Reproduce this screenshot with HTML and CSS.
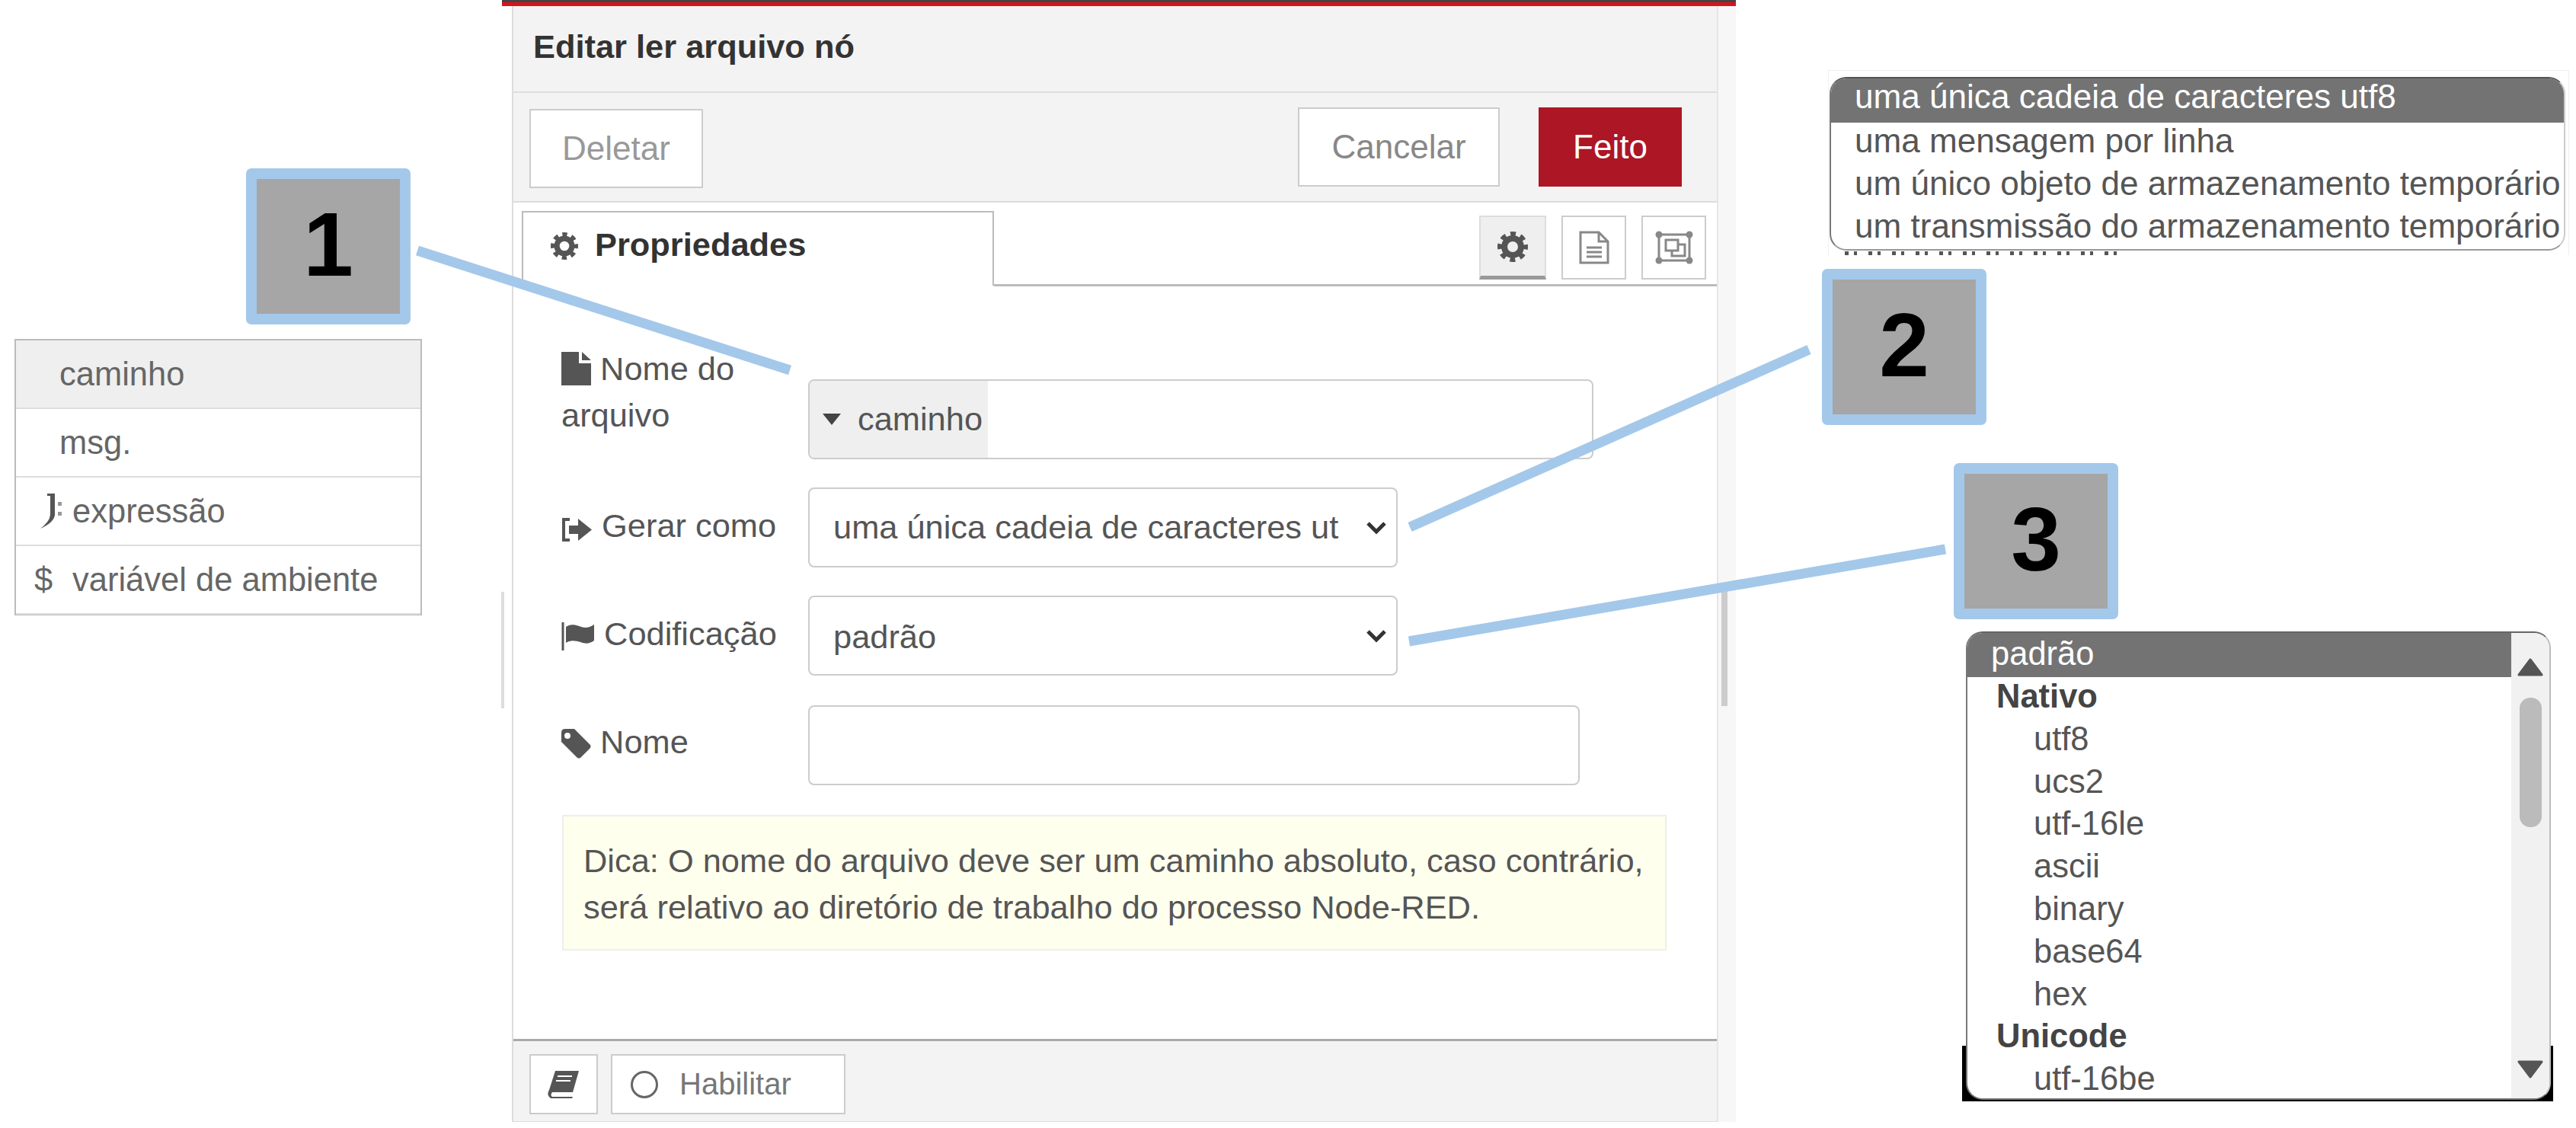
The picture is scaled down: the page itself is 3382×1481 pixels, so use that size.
FILE: index.html
```html
<!DOCTYPE html>
<html lang="pt">

<head>
  <meta charset="UTF-8" />
  <title>Editar ler arquivo nó</title>
  <link rel="stylesheet" href="styles.css">
</head>

<body>
  <svg class="defs" width="0" height="0">
    <symbol id="gear" viewBox="0 0 40 40">
      <circle cx="20" cy="20" r="11" fill="none" stroke="#555" stroke-width="8" />
      <circle cx="20" cy="20" r="17" fill="none" stroke="#555" stroke-width="6" stroke-dasharray="7 6.35" stroke-dashoffset="3.5" />
    </symbol>
    <symbol id="chevron" viewBox="0 0 28 18">
      <path d="M3 3 L14 14 L25 3" fill="none" stroke="#333" stroke-width="5" />
    </symbol>
  </svg>

  <!-- painel de edicao -->
  <div class="editor">
    <div class="editor-bar"></div>
    <div class="tray">
      <div class="tray-main">
        <div class="tray-title">Editar ler arquivo nó</div>

        <div class="tray-toolbar">
          <button class="btn btn-muted">Deletar</button>
          <div class="toolbar-right">
            <button class="btn btn-cancel">Cancelar</button>
            <button class="btn btn-primary">Feito</button>
          </div>
        </div>

        <div class="tray-content">
          <div class="tabs">
            <div class="tab">
              <svg class="tab-icon"><use href="#gear" /></svg>
              <span>Propriedades</span>
            </div>
            <div class="tabs-rest">
              <div class="tab-btn tab-btn-on"><svg class="tab-btn-gear"><use href="#gear" /></svg></div>
              <div class="tab-btn">
                <svg class="doc-icon" viewBox="0 0 40 44">
                  <path d="M2 2 H26 L38 14 V42 H2 Z M26 2 V14 H38" fill="none" stroke="#888" stroke-width="3" />
                  <path d="M10 22 H30 M10 28 H30 M10 34 H30" stroke="#888" stroke-width="3" />
                </svg>
              </div>
              <div class="tab-btn">
                <svg class="layout-icon" viewBox="0 0 52 44">
                  <path d="M6 5 H46 V39 H6 Z" fill="none" stroke="#888" stroke-width="3" />
                  <circle cx="6" cy="5" r="4.5" fill="#888" />
                  <circle cx="46" cy="5" r="4.5" fill="#888" />
                  <circle cx="6" cy="39" r="4.5" fill="#888" />
                  <circle cx="46" cy="39" r="4.5" fill="#888" />
                  <path d="M15 12 H31 V26 H15 Z M31 18 H40 V33 H23 V26" fill="none" stroke="#888" stroke-width="3" />
                </svg>
              </div>
            </div>
          </div>

          <div class="form">
            <div class="form-row">
              <label class="field-label label-tall">
                <svg class="lbl-icon" width="39" height="44" viewBox="0 0 39 44"><path d="M0 0 H23 V15 H39 V44 H0 Z M27 0 L39 11 H27 Z" fill="#555" /></svg>
                Nome do arquivo
              </label>
              <div class="typed-input">
                <div class="typed-btn"><span class="caret"></span>caminho</div>
              </div>
            </div>

            <div class="form-row">
              <label class="field-label">
                <svg class="lbl-icon" width="41" height="33" viewBox="0 0 41 33"><path d="M11 3 H3 V30 H11" fill="none" stroke="#555" stroke-width="4" /><path d="M10 11 H22 V2 L40 16.5 L22 31 V22 H10 Z" fill="#555" /></svg>
                Gerar como
              </label>
              <div class="select">
                <span class="select-text">uma única cadeia de caracteres ut</span>
                <svg class="chevron"><use href="#chevron" /></svg>
              </div>
            </div>

            <div class="form-row form-row-wide">
              <label class="field-label">
                <svg class="lbl-icon" width="44" height="37" viewBox="0 0 44 37"><path d="M2 0 V37" stroke="#555" stroke-width="3" /><path d="M6 6 C14 1 20 4 26 6 C32 8 37 7 43 3 V24 C36 29 31 28 25 26 C18 24 12 23 6 27 Z" fill="#555" /></svg>
                Codificação
              </label>
              <div class="select">
                <span class="select-text select-text-low">padrão</span>
                <svg class="chevron"><use href="#chevron" /></svg>
              </div>
            </div>

            <div class="form-row">
              <label class="field-label label-name">
                <svg class="lbl-icon" width="39" height="39" viewBox="0 0 39 39"><path d="M0 5 Q0 0 5 0 H17 L38 21 Q39 23 38 25 L25 38 Q23 39 21 38 L0 17 Z M8 5 A4 4 0 1 0 8.01 13 A4 4 0 1 0 8 5 Z" fill="#555" fill-rule="evenodd" /></svg>
                Nome
              </label>
              <div class="text-input"></div>
            </div>

            <div class="form-tips">Dica: O nome do arquivo deve ser um caminho absoluto, caso contrário, será relativo ao diretório de trabalho do processo Node-RED.</div>
          </div>
        </div>

        <div class="tray-footer">
          <div class="foot-btn foot-book">
            <svg width="42" height="37" viewBox="0 0 42 37"><path d="M10 1 H41 L33 29 H6 Q3 33 6 35 H33 L32 37 H4 Q-2 33 2 26 Z" fill="#555" /><path d="M13 8 H32 M11 14 H30" stroke="#fff" stroke-width="2" /></svg>
          </div>
          <div class="foot-btn foot-enable"><span class="ring"></span>Habilitar</div>
        </div>
      </div>
      <div class="tray-scroll"><div class="tray-thumb"></div></div>
    </div>
  </div>
  <div class="tray-grip"></div>

  <!-- linhas dos marcadores -->
  <svg class="connectors" width="3382" height="1481">
    <line x1="548" y1="329" x2="1037" y2="486" />
    <line x1="2375" y1="459" x2="1851" y2="692" />
    <line x1="2554" y1="721" x2="1850" y2="842" />
  </svg>

  <!-- marcadores -->
  <div class="badge badge-1">1</div>
  <div class="badge badge-2">2</div>
  <div class="badge badge-3">3</div>

  <!-- menu do campo -->
  <ul class="type-menu">
    <li class="type-item type-item-on"><span class="type-text">caminho</span></li>
    <li class="type-item"><span class="type-text">msg.</span></li>
    <li class="type-item">
      <svg class="type-icon" width="34" height="46" viewBox="0 0 34 46"><path d="M9 0 H19 V28 Q18 38 0 46 Q12 37 13 28 V3 H9 Z" fill="#555" /><path d="M23 11 h5 v5 h-5 Z M23 24 h5 v5 h-5 Z" fill="#999" /></svg>
      <span>expressão</span>
    </li>
    <li class="type-item">
      <span class="type-icon">$</span>
      <span>variável de ambiente</span>
    </li>
  </ul>

  <!-- lista do marcador 2 -->
  <div class="list-frame list-frame-2">
    <ul class="option-list">
      <li class="option option-on">uma única cadeia de caracteres utf8</li>
      <li class="option">uma mensagem por linha</li>
      <li class="option">um único objeto de armazenamento temporário</li>
      <li class="option">um transmissão do armazenamento temporário</li>
    </ul>
    <div class="list-cut"></div>
  </div>

  <!-- lista do marcador 3 -->
  <div class="list-frame-3">
    <div class="encoding-list">
      <ul class="encoding-options">
        <li class="enc enc-on">padrão</li>
        <li class="enc enc-group">Nativo</li>
        <li class="enc enc-sub">utf8</li>
        <li class="enc enc-sub">ucs2</li>
        <li class="enc enc-sub">utf-16le</li>
        <li class="enc enc-sub">ascii</li>
        <li class="enc enc-sub">binary</li>
        <li class="enc enc-sub">base64</li>
        <li class="enc enc-sub">hex</li>
        <li class="enc enc-group">Unicode</li>
        <li class="enc enc-sub">utf-16be</li>
      </ul>
      <div class="list-scrollbar">
        <svg class="arrow" viewBox="0 0 34 24"><path d="M17 2 L32 22 H2 Z" fill="#555" stroke="#555" stroke-width="3" stroke-linejoin="round" /></svg>
        <div class="list-thumb"></div>
        <svg class="arrow arrow-down" viewBox="0 0 34 24"><path d="M2 2 H32 L17 22 Z" fill="#555" stroke="#555" stroke-width="3" stroke-linejoin="round" /></svg>
      </div>
    </div>
  </div>
</body>

</html>
```

FILE: styles.css
```css
html,
body {
  margin: 0;
  height: 100%;
  background: #fff;
  font-family: "Liberation Sans", Arial, sans-serif;
  font-size: 43.4px;
  color: #555;
  overflow: hidden;
}

ul {
  list-style: none;
  margin: 0;
  padding: 0;
}

.defs {
  position: absolute;
}

/* painel */
.editor {
  position: absolute;
  left: 659px;
  top: 0;
  width: 1620px;
}

.editor-bar {
  height: 3px;
  background: #444;
  border-bottom: 5px solid #d8121c;
}

.tray {
  display: flex;
  height: 1465px;
  margin-left: 13px;
}

.tray-main {
  width: 1582px;
  display: flex;
  flex-direction: column;
  border-left: 2px solid #ddd;
  box-sizing: border-box;
}

.tray-scroll {
  width: 25px;
  background: #f7f7f7;
  border-left: 2px solid #e6e6e6;
  box-sizing: border-box;
}

.tray-thumb {
  width: 8px;
  height: 162px;
  margin: 757px 0 0 4px;
  background: #ccc;
}

.tray-grip {
  position: absolute;
  left: 658px;
  top: 777px;
  width: 4px;
  height: 153px;
  background: #ddd;
}

.tray-title {
  height: 114px;
  padding: 0 0 6px 26px;
  box-sizing: border-box;
  display: flex;
  align-items: center;
  background: #f3f3f3;
  border-bottom: 2px solid #ddd;
  font-weight: bold;
  color: #333;
}

.tray-toolbar {
  height: 144px;
  padding: 0 46px 0 21px;
  box-sizing: border-box;
  display: flex;
  align-items: center;
  justify-content: space-between;
  background: #f3f3f3;
  border-bottom: 2px solid #ddd;
}

.toolbar-right {
  display: flex;
  gap: 51px;
}

.btn {
  height: 104px;
  box-sizing: border-box;
  border: 2px solid #ccc;
  background: #fff;
  font-family: inherit;
  font-size: 44px;
  padding: 0;
}

.btn-muted {
  width: 228px;
  color: #999;
  margin-top: 4px;
}

.btn-cancel {
  width: 265px;
  color: #888;
}

.btn-primary {
  width: 188px;
  color: #fff;
  background: #ad1625;
  border-color: #ad1625;
}

.tray-content {
  flex: 1;
  background: #fff;
  display: flex;
  flex-direction: column;
}

/* abas */
.tabs {
  display: flex;
  height: 109px;
  padding: 11px 0 0 11px;
  box-sizing: border-box;
}

.tab {
  width: 620px;
  box-sizing: border-box;
  border: 2px solid #bbb;
  border-bottom: none;
  padding: 18px 0 0 36px;
  display: flex;
  align-items: flex-start;
  gap: 22px;
  font-weight: bold;
  color: #333;
}

.tab-icon {
  width: 36px;
  height: 38px;
  margin-top: 7px;
}

.tabs-rest {
  flex: 1;
  display: flex;
  justify-content: flex-end;
  gap: 20px;
  padding: 6px 14px 0 0;
  border-bottom: 3px solid #bbb;
  margin-bottom: -1px;
}

.tab-btn {
  width: 85px;
  height: 84px;
  box-sizing: border-box;
  border: 2px solid #ccc;
  display: flex;
  align-items: center;
  justify-content: center;
}

.tab-btn-on {
  width: 88px;
  background: #efefef;
  border-bottom: 5px solid #999;
  border-left-color: #ddd;
  border-right-color: #ddd;
  border-top-color: #ddd;
}

.tab-btn-gear {
  width: 40px;
  height: 40px;
}

.doc-icon {
  width: 40px;
  height: 44px;
}

.layout-icon {
  width: 52px;
  height: 44px;
}

/* formulario */
.form {
  padding: 123px 0 0 63px;
}

.form-row {
  display: flex;
  align-items: flex-start;
  margin-bottom: 37px;
}

.form-row-wide {
  margin-bottom: 39px;
}

.field-label {
  width: 324px;
  padding: 20px 30px 0 0;
  box-sizing: border-box;
  line-height: 61px;
  flex: none;
}

.label-tall {
  padding-top: 0;
  margin-top: -44px;
}

.label-name {
  padding-top: 18px;
}

.lbl-icon {
  vertical-align: -7px;
}

.typed-input,
.select,
.text-input {
  height: 105px;
  box-sizing: border-box;
  border: 2px solid #ccc;
  border-radius: 8px;
  background: #fff;
}

.typed-input {
  width: 1031px;
  overflow: hidden;
}

.typed-btn {
  width: 234px;
  height: 100%;
  background: #efefef;
  display: flex;
  align-items: center;
  padding-left: 17px;
  box-sizing: border-box;
}

.caret {
  width: 0;
  height: 0;
  margin-right: 22px;
  border-left: 12px solid transparent;
  border-right: 12px solid transparent;
  border-top: 15px solid #444;
}

.select {
  width: 774px;
  display: flex;
  align-items: center;
  padding: 0 14px 0 31px;
}

.select-text {
  width: 667px;
  margin-right: 32px;
  flex: none;
  white-space: nowrap;
}

.select-text-low {
  padding-top: 3px;
}

.chevron {
  width: 28px;
  height: 18px;
  flex: none;
}

.text-input {
  width: 1013px;
}

.form-tips {
  width: 1450px;
  height: 178px;
  margin: 39px 0 0 1px;
  padding: 28px 16px 0 26px;
  box-sizing: border-box;
  background: #ffffee;
  border: 2px solid #eee;
  line-height: 61px;
  color: #555;
}

/* rodape */
.tray-footer {
  height: 109px;
  flex: none;
  display: flex;
  gap: 17px;
  padding: 17px 0 0 21px;
  box-sizing: border-box;
  background: #f3f3f3;
  border-top: 3px solid #aaa;
  border-bottom: 1px solid #ddd;
}

.foot-btn {
  height: 79px;
  box-sizing: border-box;
  border: 2px solid #ccc;
  background: #fff;
  display: flex;
  align-items: center;
}

.foot-book {
  width: 90px;
  justify-content: center;
}

.foot-enable {
  width: 308px;
  padding-left: 24px;
  font-size: 40px;
  color: #777;
}

.ring {
  width: 36px;
  height: 36px;
  box-sizing: border-box;
  border: 3px solid #666;
  border-radius: 50%;
  margin-right: 28px;
}

/* linhas e marcadores */
.connectors {
  position: absolute;
  left: 0;
  top: 0;
}

.connectors line {
  stroke: #a4c8ea;
  stroke-width: 13;
}

.badge {
  position: absolute;
  box-sizing: border-box;
  width: 216px;
  height: 205px;
  padding-bottom: 5px;
  border: 14px solid #a4c8ea;
  border-radius: 7px;
  background: #a6a6a6;
  color: #000;
  font-weight: bold;
  font-size: 118px;
  display: flex;
  align-items: center;
  justify-content: center;
}

.badge-1 {
  left: 323px;
  top: 221px;
}

.badge-2 {
  left: 2392px;
  top: 353px;
}

.badge-3 {
  left: 2565px;
  top: 608px;
}

/* menu do campo */
.type-menu {
  position: absolute;
  left: 19px;
  top: 445px;
  width: 535px;
  box-sizing: border-box;
  border: 2px solid #bbb;
  border-bottom-width: 1px;
  background: #fff;
  font-size: 43.5px;
}

.type-item {
  height: 90px;
  box-sizing: border-box;
  border-bottom: 2px solid #ddd;
  display: flex;
  align-items: center;
  padding-left: 24px;
  color: #666;
}

.type-item-on {
  background: #efefef;
}

.type-text {
  margin-left: 33px;
}

.type-icon {
  width: 50px;
  flex: none;
}

/* lista do marcador 2 */
.list-frame-2 {
  position: absolute;
  left: 2400px;
  top: 92px;
  width: 973px;
  height: 243px;
  box-sizing: border-box;
  border: 1px solid #f0f0f0;
  border-bottom: none;
  padding: 8px 4px 0 1px;
  font-size: 44.1px;
}

.option-list {
  height: 228px;
  box-sizing: border-box;
  border: 2px solid #777;
  border-top-color: #555;
  border-bottom-color: #999;
  border-right-color: #ccc;
  border-radius: 22px;
  overflow: hidden;
  background: #fff;
}

.option {
  height: 56px;
  line-height: 48px;
  padding-left: 31px;
  white-space: nowrap;
  color: #555;
}

.option-on {
  height: 58px;
  background: #737373;
  color: #fff;
}

.list-cut {
  height: 5px;
  margin: 1px 0 0 20px;
  width: 370px;
  background: repeating-linear-gradient(90deg, #555 0 5px, #fff 5px 12px, #555 12px 16px, #fff 16px 31px);
}

/* lista do marcador 3 */
.list-frame-3 {
  position: absolute;
  left: 2576px;
  top: 828px;
  width: 776px;
  height: 618px;
  padding: 1px 3px 2px 5px;
  box-sizing: border-box;
  background: linear-gradient(#fff 545px, #000 545px);
}

.encoding-list {
  height: 100%;
  display: flex;
  box-sizing: border-box;
  border: 2px solid #777;
  border-top-color: #666;
  border-right-color: #bbb;
  border-radius: 22px;
  overflow: hidden;
  background: #fff;
}

.encoding-options {
  flex: 1;
  overflow: hidden;
  font-size: 43.5px;
}

.enc {
  height: 55.8px;
  line-height: 55.8px;
  white-space: nowrap;
  color: #555;
}

.enc-on {
  height: 58px;
  margin-bottom: -2px;
  padding-left: 31px;
  background: #737373;
  color: #fff;
}

.enc-group {
  padding-left: 38px;
  font-weight: bold;
  color: #444;
}

.enc-sub {
  padding-left: 87px;
}

.list-scrollbar {
  width: 50px;
  flex: none;
  display: flex;
  flex-direction: column;
  align-items: center;
  padding: 33px 0 26px;
  box-sizing: border-box;
  background: #f1f1f1;
}

.arrow {
  width: 34px;
  height: 24px;
  flex: none;
}

.arrow-down {
  margin-top: auto;
}

.list-thumb {
  width: 29px;
  height: 170px;
  margin-top: 28px;
  border-radius: 14px;
  background: #bbb;
}
```
